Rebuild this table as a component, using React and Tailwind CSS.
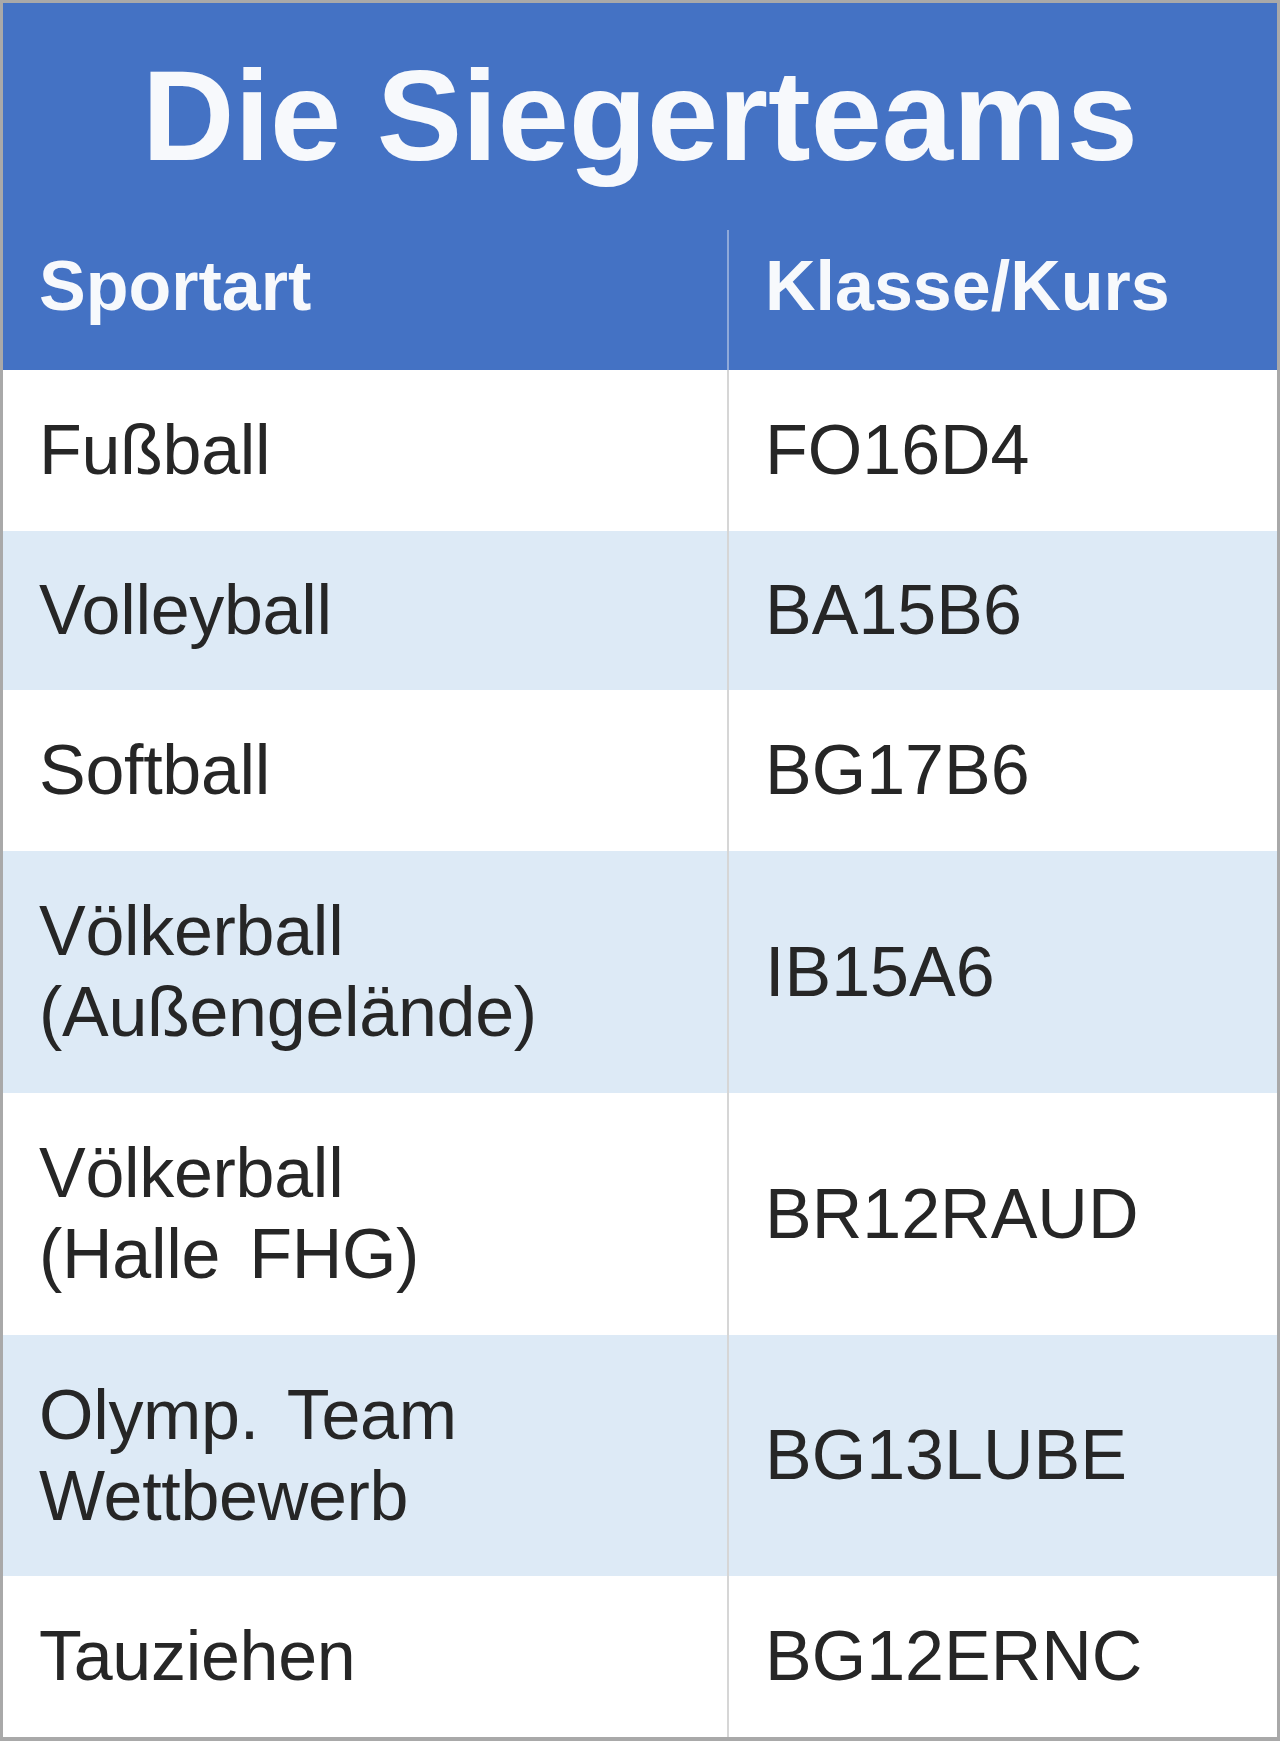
import React from 'react';

const rows = [
  { sport: ['Fußball'], klasse: 'FO16D4', h: 'h-[161px]' },
  { sport: ['Volleyball'], klasse: 'BA15B6', h: 'h-[159px]' },
  { sport: ['Softball'], klasse: 'BG17B6', h: 'h-[161px]' },
  { sport: ['Völkerball', '(Außengelände)'], klasse: 'IB15A6', h: 'h-[242px]' },
  { sport: ['Völkerball', '(Halle FHG)'], klasse: 'BR12RAUD', h: 'h-[242px]' },
  { sport: ['Olymp. Team', 'Wettbewerb'], klasse: 'BG13LUBE', h: 'h-[241px]' },
  { sport: ['Tauziehen'], klasse: 'BG12ERNC', h: 'h-[161px]' },
];

const App = () => {
  return (
    <div className="w-[1280px] h-[1741px] bg-white font-['Liberation_Sans',Arial,sans-serif]">
      <div className="w-full h-full border-t-[3px] border-l-[3px] border-r-[3px] border-b-[4px] border-[#a9a9a9] flex flex-col">
        {/* Title */}
        <div className="h-[225px] bg-[#4472c4] flex justify-center pt-[41px]">
          <h1 className="text-[128px] leading-[143px] font-bold text-[#f7f9fc]">Die Siegerteams</h1>
        </div>

        {/* Column headings */}
        <div className="h-[142px] bg-[#4472c4] grid grid-cols-[724px_1fr] text-[70px] leading-[81px] font-bold text-[#f7f9fc]">
          <div className="pl-[36px] pt-[18px]">Sportart</div>
          <div className="mt-[2px] border-l-2 border-[#8fa9d9] pl-[36px] pt-[16px]">Klasse/Kurs</div>
        </div>

        {/* Rows */}
        {rows.map((row, i) => (
          <div
            key={row.klasse}
            className={`${row.h} grid grid-cols-[724px_1fr] text-[70px] leading-[81px] text-[#262626] ${
              i % 2 === 1 ? 'bg-[#ddeaf6]' : 'bg-white'
            }`}
          >
            <div className="pl-[36px] flex flex-col justify-center [word-spacing:10px] tracking-[-0.3px]">
              {row.sport.map((line) => (
                <span key={line}>{line}</span>
              ))}
            </div>
            <div className="border-l-2 border-[#d6d6d6] pl-[36px] flex items-center">{row.klasse}</div>
          </div>
        ))}
      </div>
    </div>
  );
};

export default App;
